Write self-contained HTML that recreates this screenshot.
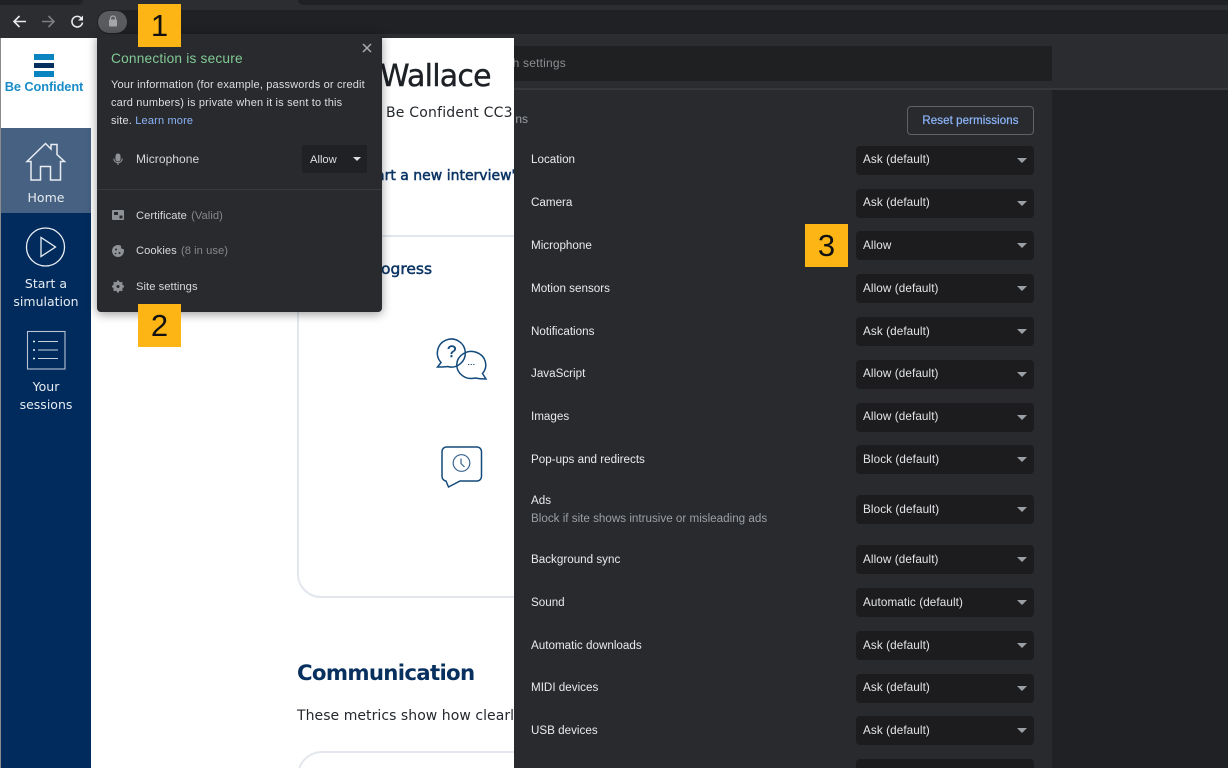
<!DOCTYPE html>
<html><head><meta charset="utf-8"><title>Site settings</title>
<style>
html,body{margin:0;padding:0;width:1228px;height:768px;overflow:hidden;background:#fff}
body{position:relative;font-family:"Liberation Sans",sans-serif}
.a{position:absolute;white-space:nowrap}
.c{transform:translateX(-50%);text-align:center}
.n{font-family:"DejaVu Sans",sans-serif}
.lab{position:absolute;left:531px;font-size:11.650px;line-height:14px;color:#e8eaed;white-space:nowrap}
.sel{position:absolute;left:856px;width:178px;height:29px;background:#1c1c1e;border-radius:4px;color:#e3e5e8;font-size:11.700px;line-height:27px;text-indent:7px;letter-spacing:.1px}
.sel.l{line-height:29px}
.sel:after{content:"";position:absolute;right:7px;top:12px;border-left:5px solid transparent;border-right:5px solid transparent;border-top:5px solid #9aa0a6}
.y{position:absolute;width:43px;height:43px;background:#fdb515;color:#111;font-size:31px;line-height:43px;text-align:center;font-weight:400}
.nav{position:absolute;left:1px;width:90px;text-align:center;color:#e6ebf1;font-size:12.500px;line-height:18px;font-family:"DejaVu Sans",sans-serif}
.pt{position:absolute;color:#d6d8db;font-size:11.200px;line-height:14px;white-space:nowrap;letter-spacing:.05px}
</style></head><body>

<!-- browser chrome -->
<div class="a" style="left:0;top:0;width:1228px;height:38px;background:#2c2d30"></div>
<div class="a" style="left:0;top:0;width:83px;height:5px;background:#202124;border-radius:0 0 6px 0"></div>
<div class="a" style="left:298px;top:0;width:930px;height:5px;background:#202124;border-radius:0 0 0 6px"></div>
<div class="a" style="left:97px;top:10px;width:1131px;height:24px;background:#202124;border-radius:12px 0 0 12px"></div>
<div class="a" style="left:98px;top:11px;width:29px;height:22px;background:#5a5b5e;border-radius:11px"></div>
<svg class="a" style="left:0;top:8px" width="130" height="28" viewBox="0 0 130 28" fill="none">
<path d="M26 13.500H14.500M19.500 8L14 13.500L19.500 19" stroke="#e8eaed" stroke-width="1.600"/>
<path d="M42 13.500H53.500M48.500 8L54 13.500L48.500 19" stroke="#7c7e82" stroke-width="1.600"/>
<path d="M81.500 10.500A5.300 5.300 0 1 0 82.500 14.500" stroke="#e8eaed" stroke-width="1.600"/>
<path d="M83 7.500V12.500H78Z" fill="#e8eaed"/>
<rect x="109" y="11.500" width="8" height="7" rx="1" fill="#a4a6a9"/>
<path d="M110.500 12V10.500a2.500 2.500 0 0 1 5 0V12" stroke="#a4a6a9" stroke-width="1.200"/>
</svg>

<!-- page white -->
<div class="a" style="left:0;top:38px;width:1px;height:730px;background:#8a8c8f"></div>
<!-- logo -->
<div class="a" style="left:34px;top:54px;width:20px;height:6px;background:#0a84c1"></div>
<div class="a" style="left:34px;top:63px;width:20px;height:5px;background:#04305f"></div>
<div class="a" style="left:34px;top:71px;width:20px;height:6px;background:#0a84c1"></div>
<div class="a c" style="left:44px;top:79px;font-size:12.800px;line-height:15px;font-weight:700;color:#1a8cc8;letter-spacing:-.1px">Be Confident</div>

<!-- sidebar -->
<div class="a" style="left:1px;top:128px;width:90px;height:640px;background:#002b5c"></div>
<div class="a" style="left:1px;top:128px;width:90px;height:85px;background:#466181"></div>
<svg class="a" style="left:1px;top:128px" width="90" height="290" viewBox="0 0 90 290" fill="none" stroke="#e9edf2">
<path d="M26 33.500L44.500 15.500L50 21V16.500H56V26.500L63.500 33.500H59.500V52H49.500V38.500H39.500V52H30V33.500Z" stroke-width="1.500"/>
<circle cx="44.500" cy="119" r="19" stroke-width="1.300"/>
<path d="M40 109.500V128.500L54.500 119Z" stroke-width="1.300"/>
<rect x="26.500" y="203.500" width="37.500" height="37.500" stroke-width="1.100" stroke="#b9c4d2"/>
<path d="M37 213.500H57M37 222H57M37 230.500H57" stroke-width="1.100" stroke="#c7d0db"/>
<path d="M32 213.500H34M32 222H34M32 230.500H34" stroke-width="1.400"/>
</svg>
<div class="nav" style="top:189px">Home</div>
<div class="nav" style="top:275px">Start a<br>simulation</div>
<div class="nav" style="top:378px">Your<br>sessions</div>

<!-- page content -->
<div class="a n" style="left:380px;top:59px;font-size:30px;line-height:36px;color:#1d2126;letter-spacing:-.75px;-webkit-text-stroke:.4px #1d2126">Wallace</div>
<div class="a n" style="left:386px;top:104px;font-size:14px;line-height:18px;color:#24282d;letter-spacing:.2px">Be Confident CC3</div>
<div class="a n" style="left:376px;top:167px;font-size:14px;line-height:18px;color:#0c3565;-webkit-text-stroke:.5px #0c3565;letter-spacing:0">art a new interview'</div>
<div class="a" style="left:297px;top:235px;width:300px;height:359px;border:2px solid #e3e7ed;border-radius:24px"></div>
<div class="a n" style="left:381px;top:260px;font-size:15.500px;line-height:19px;color:#0c3565;-webkit-text-stroke:.5px #0c3565;letter-spacing:0">ogress</div>
<svg class="a" style="left:430px;top:334px" width="62" height="160" viewBox="0 0 62 160" fill="none" stroke="#134a7c" stroke-width="1.500">
<path d="M7.500 33L11 28.500A14 14 0 1 1 17.500 32.500Q15 33 7.500 33Z"/>
<path d="M56 45L52.500 39.500A14.500 13.500 0 1 0 45 44Q50 45 56 45Z"/>
<path d="M16 147L18.500 153L30 147H47a4.500 4.500 0 0 0 4.500-4.500V117.500a4.500 4.500 0 0 0-4.500-4.500H16.500a4.500 4.500 0 0 0-4.500 4.500V142.500a4.500 4.500 0 0 0 4.500 4.500Z"/>
<circle cx="31.500" cy="129" r="8.300" stroke="#3a6592" stroke-width="1.200"/>
<path d="M31 124.500V129.500L34.500 133" stroke="#3a6592" stroke-width="1.200"/>
<path d="M38 30.500h1.200M40.600 30.500h1.200M43.200 30.500h1.200" stroke-width="1"/>
</svg>
<div class="a" style="left:447px;top:342px;font-size:17px;line-height:19px;color:#134a7c;-webkit-text-stroke:.4px #134a7c">?</div>
<div class="a n" style="left:297px;top:659px;font-size:21.300px;line-height:30px;color:#07305f;font-weight:700;letter-spacing:-.7px">Communication</div>
<div class="a n" style="left:297px;top:707px;font-size:14px;line-height:18px;color:#24282d;letter-spacing:.05px">These metrics show how clearly</div>
<svg class="a" style="left:297px;top:751px" width="320" height="17"><path d="M2.370 17A24 24 0 0 1 25 1H301" fill="none" stroke="#e3e7ed" stroke-width="2"/></svg>

<!-- settings panel -->
<div class="a" style="left:514px;top:38px;width:714px;height:730px;background:#202124"></div>
<div class="a" style="left:514px;top:38px;width:714px;height:52px;background:#2b2c2f;border-bottom:2px solid #37383b;box-sizing:border-box"></div>
<div class="a" style="left:514px;top:46px;width:538px;height:35px;background:#1f2022"></div>
<div class="a" style="left:514px;top:90px;width:538px;height:678px;background:#292a2d"></div>
<div class="a" style="left:514px;top:56px;width:52px;overflow:hidden;font-size:12px;line-height:14px;color:#8b8e92;direction:rtl;letter-spacing:.2px">ch settings</div>
<div class="a" style="left:514px;top:112px;width:14px;overflow:hidden;font-size:12px;line-height:14px;color:#9aa0a6;direction:rtl">ns</div>
<div class="a" style="left:907px;top:106px;width:125px;height:27px;border:1.500px solid #5f6368;border-radius:4px;color:#8ab4f8;font-size:11.500px;-webkit-text-stroke:.25px #8ab4f8;letter-spacing:.1px;line-height:28px;text-align:center">Reset permissions</div>

<div class="lab" style="top:153px">Location</div><div class="sel" style="top:146px">Ask (default)</div>
<div class="lab" style="top:196px">Camera</div><div class="sel" style="top:189px">Ask (default)</div>
<div class="lab" style="top:239px">Microphone</div><div class="sel l" style="top:231px">Allow</div>
<div class="lab" style="top:282px">Motion sensors</div><div class="sel l" style="top:274px">Allow (default)</div>
<div class="lab" style="top:325px">Notifications</div><div class="sel l" style="top:317px">Ask (default)</div>
<div class="lab" style="top:367px">JavaScript</div><div class="sel" style="top:360px">Allow (default)</div>
<div class="lab" style="top:410px">Images</div><div class="sel" style="top:403px">Allow (default)</div>
<div class="lab" style="top:453px">Pop-ups and redirects</div><div class="sel l" style="top:445px">Block (default)</div>
<div class="lab" style="top:494px">Ads</div>
<div class="lab" style="top:512px;color:#9aa0a6">Block if site shows intrusive or misleading ads</div><div class="sel l" style="top:495px">Block (default)</div>
<div class="lab" style="top:553px">Background sync</div><div class="sel l" style="top:545px">Allow (default)</div>
<div class="lab" style="top:596px">Sound</div><div class="sel l" style="top:588px">Automatic (default)</div>
<div class="lab" style="top:639px">Automatic downloads</div><div class="sel l" style="top:631px">Ask (default)</div>
<div class="lab" style="top:681px">MIDI devices</div><div class="sel" style="top:674px">Ask (default)</div>
<div class="lab" style="top:724px">USB devices</div><div class="sel l" style="top:716px">Ask (default)</div>
<div class="a" style="left:856px;top:759px;width:178px;height:9px;background:#1c1c1e;border-radius:4px 4px 0 0"></div>

<!-- popup -->
<div class="a" style="left:97px;top:34px;width:285px;height:278px;background:#292a2d;border-radius:0 0 4px 4px;box-shadow:0 2px 10px rgba(0,0,0,.4)"></div>
<div class="a" style="left:111px;top:51px;font-size:13.700px;line-height:16px;color:#81c995;letter-spacing:.2px">Connection is secure</div>
<svg class="a" style="left:360px;top:41px" width="14" height="14" fill="none" stroke="#a8abaf" stroke-width="1.500"><path d="M3 3L11 11M11 3L3 11"/></svg>
<div class="a" style="left:111px;top:76px;font-size:11px;line-height:18px;color:#dcdee0;letter-spacing:.17px">Your information (for example, passwords or credit<br>card numbers) is private when it is sent to this<br>site. <span style="color:#8ab4f8">Learn more</span></div>
<svg class="a" style="left:110px;top:150px" width="16" height="150" viewBox="0 0 16 150" fill="#8f9296">
<rect x="5.500" y="3.500" width="5" height="8" rx="2.500"/>
<path d="M3.800 8.500a4.200 4.200 0 0 0 8.400 0M8 12.500V15" fill="none" stroke="#8f9296" stroke-width="1.100"/>
<path d="M3 60H13a1 1 0 0 1 1 1V69a1 1 0 0 1-1 1H3a1 1 0 0 1-1-1V61a1 1 0 0 1 1-1Z"/>
<rect x="4" y="62" width="4" height="3" fill="#292a2d"/><rect x="9.500" y="65.500" width="3" height="3" fill="#292a2d"/>
<circle cx="8" cy="101" r="6"/><circle cx="6" cy="99.500" r="1" fill="#292a2d"/><circle cx="9.500" cy="103" r="1" fill="#292a2d"/><circle cx="5.500" cy="103.500" r=".8" fill="#292a2d"/><circle cx="13" cy="97" r="2" fill="#292a2d"/>
<circle cx="8" cy="136.500" r="3.800" fill="none" stroke="#8f9296" stroke-width="2.400"/>
<path d="M8 130.500V142.500M2 136.500H14M3.800 132.300L12.200 140.700M12.200 132.300L3.800 140.700" stroke="#8f9296" stroke-width="2"/>
<circle cx="8" cy="136.500" r="1.500" fill="#292a2d"/>
</svg>
<div class="pt" style="left:136px;top:152px;font-size:12px">Microphone</div>
<div class="a" style="left:302px;top:145px;width:65px;height:28px;background:#202124;border-radius:2px"></div>
<div class="a" style="left:310px;top:147px;font-size:11.200px;line-height:27px;color:#dcdee0">Allow</div>
<div class="a" style="left:353px;top:157px;border-left:4px solid transparent;border-right:4px solid transparent;border-top:4px solid #dcdee0"></div>
<div class="a" style="left:97px;top:189px;width:285px;height:1px;background:#393a3d"></div>
<div class="pt" style="left:136px;top:209px">Certificate <span style="color:#84878b;margin-left:1px">(Valid)</span></div>
<div class="pt" style="left:136px;top:244px">Cookies <span style="color:#84878b;margin-left:1px">(8 in use)</span></div>
<div class="pt" style="left:136px;top:280px">Site settings</div>

<!-- callouts -->
<div class="y" style="left:138px;top:4px">1</div>
<div class="y" style="left:138px;top:304px">2</div>
<div class="y" style="left:805px;top:224px">3</div>
</body></html>
